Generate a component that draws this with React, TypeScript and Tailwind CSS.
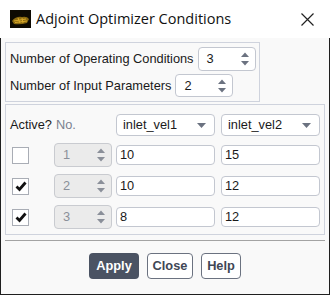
import React from 'react'

const font = { fontFamily: '"Liberation Sans", Arial, sans-serif' }

function SpinArrows({ disabled }: { disabled?: boolean }) {
  const c = disabled ? '#8a8f99' : '#6b7280'
  return (
    <svg width="10" height="16" viewBox="0 0 10 16" className="shrink-0">
      <path d="M1 6 L5 1.5 L9 6 Z" fill={c} />
      <path d="M1 10 L5 14.5 L9 10 Z" fill={c} />
    </svg>
  )
}

function Spinner({ value, width, disabled }: { value: string; width: string; disabled?: boolean }) {
  return (
    <div
      className={`flex items-center justify-between rounded-[4px] border pl-[8px] pr-[5px] ${width} ${
        disabled ? 'border-[#c9cbd0] bg-[#ebebeb] text-[#8a8f99]' : 'border-[#c3c7d0] bg-white text-[#1a1a1a]'
      }`}
    >
      <span>{value}</span>
      <SpinArrows disabled={disabled} />
    </div>
  )
}

function Dropdown({ label }: { label: string }) {
  return (
    <div className="flex h-[22px] w-[99px] items-center justify-between rounded-[4px] border border-[#c3c7d0] bg-white pl-[6px] pr-[8px]">
      <span>{label}</span>
      <svg width="9" height="5" viewBox="0 0 9 5">
        <path d="M0 0 L9 0 L4.5 5 Z" fill="#6b7280" />
      </svg>
    </div>
  )
}

function Field({ value }: { value: string }) {
  return (
    <div className="flex h-[20px] w-[99px] items-center rounded-[4px] border border-[#c3c7d0] bg-white pl-[3px] text-[#1a1a1a]">
      {value}
    </div>
  )
}

function CheckBox({ checked }: { checked?: boolean }) {
  return (
    <div className="flex h-[17px] w-[17px] items-center justify-center border border-[#a9adb5] bg-white">
      {checked && (
        <svg width="12" height="11" viewBox="0 0 12 11">
          <path d="M1.5 5.5 L4.5 8.5 L10.5 1.5" fill="none" stroke="#111" strokeWidth="2.8" />
        </svg>
      )}
    </div>
  )
}

const rows = [
  { on: false, n: '1', a: '10', b: '15' },
  { on: true, n: '2', a: '10', b: '12' },
  { on: true, n: '3', a: '8', b: '12' },
]

export default function App() {
  return (
    <div className="h-[295px] w-[330px] bg-white text-[12.8px] text-[#1a1a1a]" style={font}>
      {/* Title bar */}
      <div className="flex h-[38px] items-center bg-white pl-[10px] pr-[16px]">
        <svg width="21" height="18" viewBox="0 0 21 18" className="shrink-0">
          <rect width="21" height="18" fill="#0d0a02" />
          <path d="M2 11 Q6 6 12 7 Q17 6 19 9 L17 13 Q10 15 4 14 Z" fill="#8a6a10" />
          <path d="M4 11 L16 9 M5 12.5 L17 11 M8 8 L10 13 M12 8 L13 13" stroke="#d9a92a" strokeWidth="1" />
        </svg>
        <span className="ml-[5px] text-[14.5px] text-[#111]" style={{ fontFamily: '"Open Sans", "Noto Sans", sans-serif' }}>
          Adjoint Optimizer Conditions
        </span>
        <svg width="13" height="13" viewBox="0 0 13 13" className="ml-auto">
          <path d="M0.5 0.5 L12.5 12.5 M12.5 0.5 L0.5 12.5" stroke="#222" strokeWidth="1.2" />
        </svg>
      </div>

      {/* Body */}
      <div className="flex h-[257px] flex-col border-x border-b border-[#1f1f1f] bg-[#f9f9f9] px-[4px] pt-[4px]">
        <div className="flex h-[60px] w-[255px] flex-col gap-[3px] border border-[#cfd3dd] pl-[4px] pt-[4px]">
          <div className="flex items-center gap-[4px]">
            <span>Number of Operating Conditions</span>
            <Spinner value="3" width="w-[58px] h-[24px]" />
          </div>
          <div className="flex items-center gap-[4px]">
            <span>Number of Input Parameters</span>
            <Spinner value="2" width="w-[58px] h-[23px]" />
          </div>
        </div>

        <div className="mt-[2px] flex h-[131px] w-[320px] flex-col border border-[#cfd3dd] pl-[4px] pt-[9px]">
          <div className="flex items-start">
            <span className="w-[46px] pt-[1px]">Active?</span>
            <span className="w-[60px] pt-[1px] text-[#7b8190]">No.</span>
            <Dropdown label="inlet_vel1" />
            <div className="w-[6px]" />
            <Dropdown label="inlet_vel2" />
          </div>
          <div className="mt-[7px] flex flex-col gap-[7px]">
            {rows.map(r => (
              <div key={r.n} className="flex h-[24px] items-center">
                <div className="w-[44px] pl-[2px]">
                  <CheckBox checked={r.on} />
                </div>
                <Spinner value={r.n} width="w-[58px] h-[24px]" disabled />
                <div className="w-[4px]" />
                <Field value={r.a} />
                <div className="w-[6px]" />
                <Field value={r.b} />
              </div>
            ))}
          </div>
        </div>

        <div className="mt-[5px] h-[2px] w-[320px] border-t border-[#a3a3a3]" />

        <div className="mt-[11px] flex justify-center gap-[8px] font-bold">
          <button className="h-[26px] w-[50px] rounded-[4px] bg-[#4b5363] text-white">Apply</button>
          <button className="h-[26px] w-[46px] rounded-[4px] border border-[#6b7280] bg-white text-[#3f4756]">Close</button>
          <button className="h-[26px] w-[40px] rounded-[4px] border border-[#6b7280] bg-white text-[#3f4756]">Help</button>
        </div>
      </div>
    </div>
  )
}
